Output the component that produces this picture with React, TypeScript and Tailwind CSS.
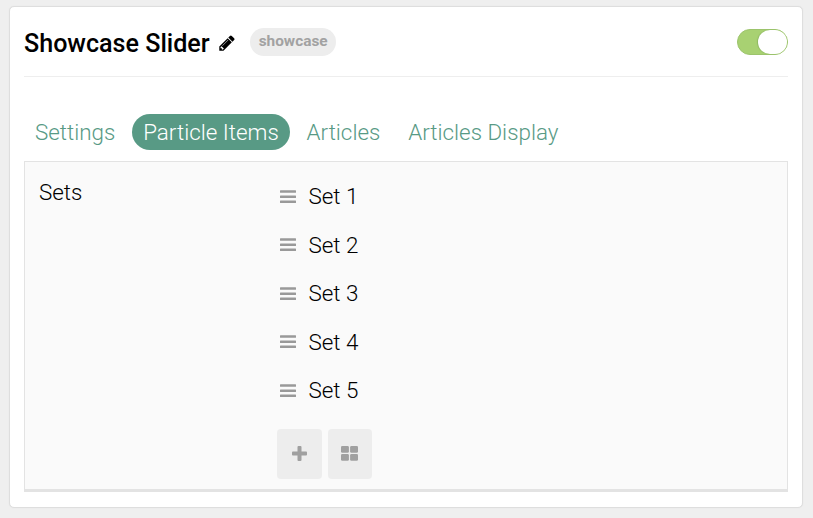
function Pencil() {
  return (
    <svg viewBox="0 0 1792 1792" className="mt-[2px] ml-[8px] size-[18px] shrink-0 text-black" fill="currentColor" aria-hidden="true">
      <path d="M491 1536l91-91-235-235-91 91v107h128v128h107zm523-928q0-22-22-22-10 0-17 7l-542 542q-7 7-7 17 0 22 22 22 10 0 17-7l542-542q7-7 7-17zm-54-192l416 416-832 832h-416v-416zm683 96q0 53-37 90l-166 166-416-416 166-165q36-38 90-38 53 0 91 38l235 234q37 39 37 91z" />
    </svg>
  );
}

function Bars() {
  return (
    <svg viewBox="0 0 16 14" className="h-[14px] w-4 text-[#999]" fill="currentColor" aria-hidden="true">
      <rect y="0.2" width="16" height="2.5" rx="0.5" />
      <rect y="5.4" width="16" height="2.5" rx="0.5" />
      <rect y="10.6" width="16" height="2.5" rx="0.5" />
    </svg>
  );
}

const tabs = ["Settings", "Particle Items", "Articles", "Articles Display"];
const sets = ["Set 1", "Set 2", "Set 3", "Set 4", "Set 5"];

export default function App() {
  return (
    <div className="h-[518px] w-[813px] overflow-hidden bg-[#efefef] pt-[6px] pl-[9px] font-['Roboto',sans-serif] text-[#111]">
      <div className="h-[502px] w-[794px] rounded-[5px] border border-[#dedede] bg-white px-[14px] shadow-[0_0_1px_#ddd]">
        <header className="flex h-[70px] items-center border-b border-[#eee]">
          <h1 className="pt-[5px] text-[25.1px] font-medium text-black">Showcase Slider</h1>
          <Pencil />
          <span className="ml-[14.5px] h-[28px] rounded-full bg-[#ededed] px-[8.5px] text-[15.4px] leading-[27px] font-bold text-[#a2a2a2]">
            showcase
          </span>
          <button aria-label="Enabled" className="ml-auto flex h-[26px] w-[51px] justify-end rounded-full border border-[#9cc46c] bg-[#a8d172]">
            <span className="h-6 w-[29px] rounded-full bg-white shadow-[-1px_0_1px_#8fb963]" />
          </button>
        </header>
        <nav className="mt-[37px] flex h-[36px] gap-[5.8px] text-[22.4px] leading-[36px] font-light text-[#589a85]">
          {tabs.map((tab) => (
            <button
              key={tab}
              className={tab === "Particle Items" ? "rounded-full bg-[#589a85] px-[11px] text-white" : "px-[11px]"}
            >
              {tab}
            </button>
          ))}
        </nav>
        <section className="mt-[11px] flex h-[331px] border border-b-[3px] border-[#e3e3e3] bg-[#fafafa] pl-[14px] text-[22.4px] font-light text-black">
          <div className="w-[238px] pt-[16px] leading-7">Sets</div>
          <div>
            <ul className="pt-[10.8px]">
              {sets.map((set) => (
                <li key={set} className="flex h-[48.45px] items-center gap-[12.5px] pl-[3px]">
                  <Bars />
                  <span>{set}</span>
                </li>
              ))}
            </ul>
            <div className="mt-[13.6px] flex gap-[5.5px] text-[#a0a0a0]">
              <button aria-label="Add" className="flex h-[50px] w-[45px] items-center justify-center rounded-[4px] bg-[#ededed]">
                <svg viewBox="0 0 15 15" className="size-[15px]" fill="currentColor" aria-hidden="true">
                  <rect x="5.5" width="4" height="15" rx="0.9" />
                  <rect y="5.5" width="15" height="4" rx="0.9" />
                </svg>
              </button>
              <button aria-label="Grid" className="flex h-[50px] w-[44.5px] items-center justify-center rounded-[4px] bg-[#ededed]">
                <svg viewBox="0 0 17 15" className="h-[15px] w-[17px]" fill="currentColor" aria-hidden="true">
                  <rect width="7.9" height="6.8" rx="1.3" />
                  <rect x="9.1" width="7.9" height="6.8" rx="1.3" />
                  <rect y="8" width="7.9" height="6.8" rx="1.3" />
                  <rect x="9.1" y="8" width="7.9" height="6.8" rx="1.3" />
                </svg>
              </button>
            </div>
          </div>
        </section>
      </div>
    </div>
  );
}
